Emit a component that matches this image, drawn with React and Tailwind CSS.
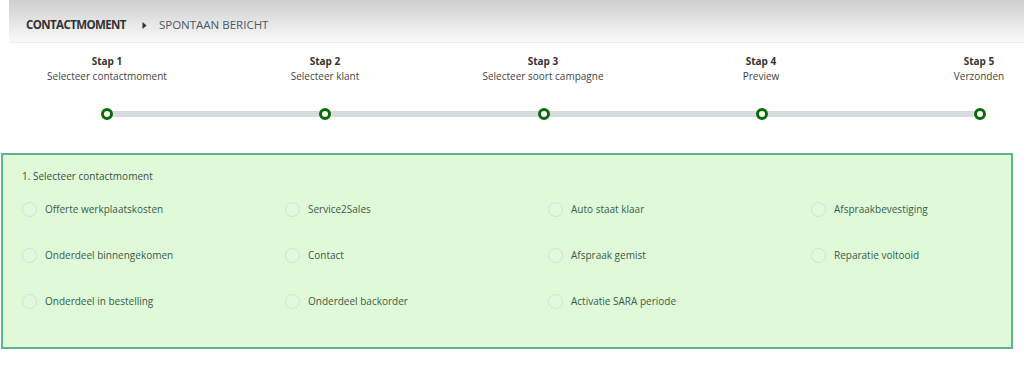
import React from 'react'

const STEPS = [
  { title: 'Stap 1', label: 'Selecteer contactmoment' },
  { title: 'Stap 2', label: 'Selecteer klant' },
  { title: 'Stap 3', label: 'Selecteer soort campagne' },
  { title: 'Stap 4', label: 'Preview' },
  { title: 'Stap 5', label: 'Verzonden' },
]

const OPTIONS = [
  'Offerte werkplaatskosten', 'Service2Sales', 'Auto staat klaar', 'Afspraakbevestiging',
  'Onderdeel binnengekomen', 'Contact', 'Afspraak gemist', 'Reparatie voltooid',
  'Onderdeel in bestelling', 'Onderdeel backorder', 'Activatie SARA periode',
]

function Breadcrumb() {
  return (
    <div className="ml-[9px] h-[43px] bg-gradient-to-b from-[#cfcfcf] to-[#f9f9f9] border-b border-[#eeeeee] flex items-center pl-[17px] pt-[8px]">
      <span className="text-[11.5px] font-bold text-[#333] tracking-[-0.6px]">CONTACTMOMENT</span>
      <svg width="5" height="7" viewBox="0 0 5 7" className="ml-[16px] mr-[12px]">
        <path d="M0.5 0 L4.5 3.5 L0.5 7 Z" fill="#333" />
      </svg>
      <span className="text-[11.5px] text-[#4b5766]">SPONTAAN BERICHT</span>
    </div>
  )
}

function Stepper() {
  return (
    <div className="h-[110px] pt-[11px]">
      <div className="grid grid-cols-[repeat(5,218px)] ml-[-2px]">
        {STEPS.map(s => (
          <div key={s.title} className="flex flex-col items-center leading-[15px]">
            <span className="text-[10px] font-bold text-[#333]">{s.title}</span>
            <span className="text-[10px] text-[#444]">{s.label}</span>
          </div>
        ))}
      </div>
      <div className="mt-[27px] ml-[107px] w-[873px] h-[6px] bg-[#d9dcdf] flex items-center justify-between">
        {STEPS.map(s => (
          <div key={s.title} className="-mx-[6px] w-[12px] h-[12px] rounded-full border-[3px] border-[#0b6b0b] bg-white" />
        ))}
      </div>
    </div>
  )
}

function OptionsPanel() {
  return (
    <div className="ml-[1px] w-[1012px] h-[196px] border-2 border-[#5eb48b] bg-[#dff9d9] pl-[19px] pt-[14px]">
      <div className="text-[10px] text-[#3c4f44] leading-[14px]">1. Selecteer contactmoment</div>
      <div className="grid grid-cols-[repeat(4,263px)] mt-[18px] gap-y-[30px]">
        {OPTIONS.map(o => (
          <label key={o} className="flex items-center h-[16px]">
            <span className="w-[15px] h-[15px] rounded-full border border-[#cde5c9] bg-[#e3f9de]" />
            <span className="ml-[8px] text-[10px] text-[#3a5c48]">{o}</span>
          </label>
        ))}
      </div>
    </div>
  )
}

export default function App() {
  return (
    <div className="w-[1024px] h-[377px] bg-white overflow-hidden" style={{ fontFamily: '"Open Sans", sans-serif' }}>
      <Breadcrumb />
      <Stepper />
      <OptionsPanel />
    </div>
  )
}
